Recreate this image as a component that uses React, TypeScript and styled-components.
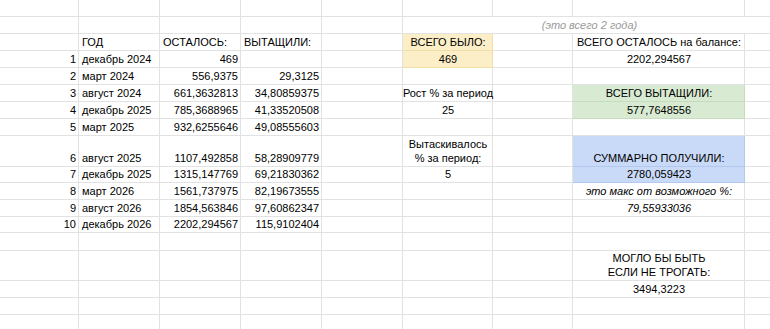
import React from "react";
import styled, { createGlobalStyle } from "styled-components";

const Global = createGlobalStyle`
  html, body { margin: 0; padding: 0; background: #ffffff; overflow: hidden; }
  body { font-family: "Liberation Sans", Arial, sans-serif; }
`;

const COLS = [79, 81, 81, 81, 81, 90, 80, 172, 31];
const ROWS = [17, 17, 17, 17, 17, 17, 17, 17, 31, 16, 17, 17, 16, 18, 30, 17, 17, 17];

const Sheet = styled.div`
  display: grid;
  grid-template-columns: ${COLS.map((c) => `${c}px`).join(" ")};
  grid-template-rows: ${ROWS.map((r) => `${r}px`).join(" ")};
  width: max-content;
  font-family: "Liberation Sans", Arial, sans-serif;
  font-size: 11px;
  color: #000;
`;

type Tone = "yellow" | "green" | "blue";

const toneBg: Record<Tone, string> = {
  yellow: "#fcefc8",
  green: "#d9ead3",
  blue: "#c9daf8",
};
const toneLine: Record<Tone, string> = {
  yellow: "#f1dfa9",
  green: "#c6dbbf",
  blue: "#b3c8ee",
};

const Cell = styled.div<{
  $align?: "left" | "right" | "center";
  $tone?: Tone;
  $italic?: boolean;
  $muted?: boolean;
  $span?: number;
}>`
  box-sizing: border-box;
  grid-column: span ${(p) => p.$span ?? 1};
  display: flex;
  align-items: flex-end;
  justify-content: ${(p) =>
    p.$align === "right" ? "flex-end" : p.$align === "center" ? "center" : "flex-start"};
  text-align: ${(p) => p.$align ?? "left"};
  padding: 0 2px 1px 3px;
  line-height: 13.5px;
  white-space: pre;
  overflow: visible;
  background: ${(p) => (p.$tone ? toneBg[p.$tone] : "transparent")};
  border-bottom: 1px solid ${(p) => (p.$tone ? toneLine[p.$tone] : "#e2e2e2")};
  border-right: 1px solid ${(p) => (p.$tone ? toneLine[p.$tone] : "#e2e2e2")};
  font-style: ${(p) => (p.$italic ? "italic" : "normal")};
  color: ${(p) => (p.$muted ? "#9a9a9a" : "#000")};
`;

type CellDef = {
  col: number;
  text: string;
  align?: "left" | "right" | "center";
  tone?: Tone;
  italic?: boolean;
  muted?: boolean;
  span?: number;
};

const table: [string, string, string, string][] = [
  ["1", "декабрь 2024", "469", ""],
  ["2", "март 2024", "556,9375", "29,3125"],
  ["3", "август 2024", "661,3632813", "34,80859375"],
  ["4", "декабрь 2025", "785,3688965", "41,33520508"],
  ["5", "март 2025", "932,6255646", "49,08555603"],
  ["6", "август 2025", "1107,492858", "58,28909779"],
  ["7", "декабрь 2025", "1315,147769", "69,21830362"],
  ["8", "март 2026", "1561,737975", "82,19673555"],
  ["9", "август 2026", "1854,563846", "97,60862347"],
  ["10", "декабрь 2026", "2202,294567", "115,9102404"],
];

const side: Record<number, CellDef[]> = {
  1: [{ col: 5, span: 4, text: "(это всего 2 года)", align: "center", italic: true, muted: true }],
  2: [
    { col: 1, text: "ГОД" },
    { col: 2, text: "ОСТАЛОСЬ:" },
    { col: 3, text: "ВЫТАЩИЛИ:" },
    { col: 5, text: "ВСЕГО БЫЛО:", align: "center", tone: "yellow" },
    { col: 7, text: "ВСЕГО ОСТАЛОСЬ на балансе:", align: "center" },
  ],
  3: [
    { col: 5, text: "469", align: "center", tone: "yellow" },
    { col: 7, text: "2202,294567", align: "center" },
  ],
  5: [
    { col: 5, text: "Рост % за период", align: "center" },
    { col: 7, text: "ВСЕГО ВЫТАЩИЛИ:", align: "center", tone: "green" },
  ],
  6: [
    { col: 5, text: "25", align: "center" },
    { col: 7, text: "577,7648556", align: "center", tone: "green" },
  ],
  8: [
    { col: 5, text: "Вытаскивалось\n% за период:", align: "center" },
    { col: 7, text: "СУММАРНО ПОЛУЧИЛИ:", align: "center", tone: "blue" },
  ],
  9: [
    { col: 5, text: "5", align: "center" },
    { col: 7, text: "2780,059423", align: "center", tone: "blue" },
  ],
  10: [{ col: 7, text: "это макс от возможного %:", align: "center", italic: true }],
  11: [{ col: 7, text: "79,55933036", align: "center", italic: true }],
  14: [{ col: 7, text: "МОГЛО БЫ БЫТЬ\nЕСЛИ НЕ ТРОГАТЬ:", align: "center" }],
  15: [{ col: 7, text: "3494,3223", align: "center" }],
};

function buildRow(r: number): CellDef[] {
  const defs: CellDef[] = [];
  const dataIdx = r >= 3 && r <= 12 ? r - 3 : -1;
  if (dataIdx >= 0 && dataIdx < table.length) {
    const [n, d, a, b] = table[dataIdx];
    defs.push({ col: 0, text: n, align: "right" });
    defs.push({ col: 1, text: d });
    defs.push({ col: 2, text: a, align: "right" });
    defs.push({ col: 3, text: b, align: "right" });
  }
  (side[r] ?? []).forEach((c) => defs.push(c));
  const out: CellDef[] = [];
  let col = 0;
  while (col < COLS.length) {
    const found = defs.find((d) => d.col === col);
    if (found) {
      out.push(found);
      col += found.span ?? 1;
    } else {
      out.push({ col, text: "" });
      col += 1;
    }
  }
  return out;
}

export default function App() {
  return (
    <>
      <Global />
      <Sheet>
        {ROWS.map((_, r) =>
          buildRow(r).map((c) => (
            <Cell
              key={`${r}-${c.col}`}
              $align={c.align}
              $tone={c.tone}
              $italic={c.italic}
              $muted={c.muted}
              $span={c.span}
            >
              {c.text}
            </Cell>
          ))
        )}
      </Sheet>
    </>
  );
}
